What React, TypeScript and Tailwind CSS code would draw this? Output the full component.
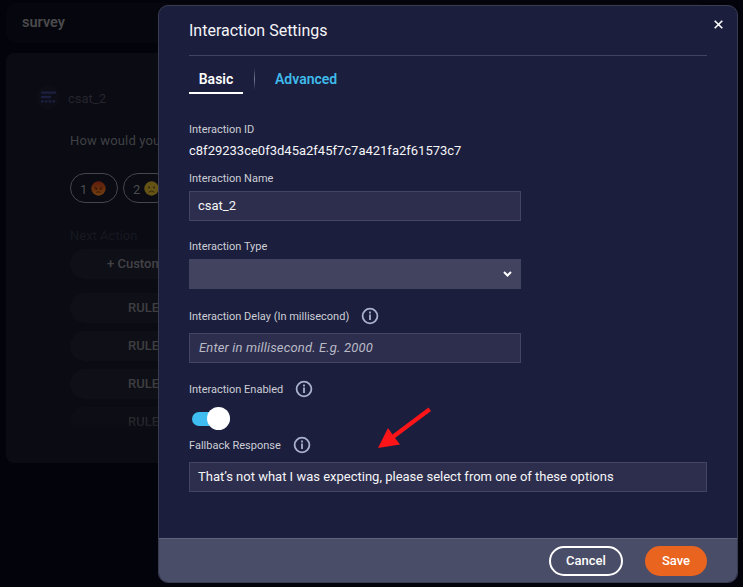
import React from "react";

function InfoIcon() {
  return (
    <svg className="h-[18px] w-[18px] shrink-0" viewBox="0 0 18 18" fill="none">
      <circle cx="9" cy="9" r="7.4" stroke="#a9b0d0" strokeWidth="1.8" />
      <path d="M9 7.6V13" stroke="#a9b0d0" strokeWidth="1.8" />
      <path d="M9 4.6V6.4" stroke="#a9b0d0" strokeWidth="1.8" />
    </svg>
  );
}

function Label({ text, width, info = false, className = "" }: { text: string; width: string; info?: boolean; className?: string }) {
  return (
    <div className={`flex h-4 items-center text-[11px] leading-4 text-[#cdced6] ${className}`}>
      <span className={`whitespace-nowrap pt-[2px] ${width}`}>{text}</span>
      {info && <InfoIcon />}
    </div>
  );
}

function Field({ children, className = "" }: { children: React.ReactNode; className?: string }) {
  return (
    <div className={`flex h-[30px] items-center border border-[#444562] bg-[#2d2e4d] pl-2 text-[13px] whitespace-nowrap ${className}`}>
      {children}
    </div>
  );
}

function Angry() {
  return (
    <svg className="h-[15px] w-[15px]" viewBox="0 0 15 15" fill="none">
      <defs>
        <linearGradient id="angry" x1="0" y1="0" x2="0" y2="1">
          <stop stopColor="#5f1c0c" />
          <stop offset="1" stopColor="#71400f" />
        </linearGradient>
      </defs>
      <circle cx="7.5" cy="7.5" r="7.2" fill="url(#angry)" />
      <path d="M3.4 6.2L6.4 7.6M11.6 6.2L8.6 7.6M5.4 11.4Q7.5 10.2 9.6 11.4" stroke="#2a0f08" strokeWidth="0.8" />
      <circle cx="5.1" cy="8.2" r="0.8" fill="#2a0f08" />
      <circle cx="9.9" cy="8.2" r="0.8" fill="#2a0f08" />
    </svg>
  );
}

function Frown() {
  return (
    <svg className="h-[15px] w-[15px]" viewBox="0 0 15 15" fill="none">
      <circle cx="7.5" cy="7.5" r="7.2" fill="#645315" />
      <ellipse cx="5" cy="6.4" rx="0.8" ry="1.1" fill="#2b220c" />
      <ellipse cx="10" cy="6.4" rx="0.8" ry="1.1" fill="#2b220c" />
      <path d="M4.6 11.2Q7.5 9 10.4 11.2" stroke="#2b220c" strokeWidth="0.8" />
    </svg>
  );
}

function Rule({ className = "" }: { className?: string }) {
  return (
    <div className={`h-[30px] w-[300px] rounded-full bg-[#0f1017] pl-[58px] text-[13px] leading-[29px] font-medium text-[#3e3e41] ${className}`}>
      RULE 1
    </div>
  );
}

function Backdrop() {
  return (
    <div className="flex h-full w-[700px] flex-col gap-[10px] overflow-hidden pt-[3px] pl-[6px]">
      <div className="h-10 shrink-0 rounded-l-[10px] bg-[#06070e] pl-4 text-[14.5px] leading-[39px] font-semibold text-[#4a4a4c]">survey</div>
      <div className="h-[410px] shrink-0 overflow-hidden rounded-l-[8px] bg-[#0a0b13] pt-8 pl-[30px]">
        <div className="flex h-6 items-center gap-2">
          <div className="flex h-6 w-6 items-center justify-center rounded-full bg-[#0d0d16]">
            <svg className="h-3 w-[15px]" viewBox="0 0 15 12" fill="none" stroke="#1c2040" strokeWidth="2.4">
              <path d="M0 1.6H15M0 6H10" />
              <path d="M0 10.4H14" strokeDasharray="2.6 1.2" />
            </svg>
          </div>
          <span className="pt-[3px] text-[13px] leading-5 text-[#25262d]">csat_2</span>
        </div>
        <div className="pt-[22px] pl-[34px]">
          <div className="h-5 whitespace-nowrap text-[13px] leading-5 tracking-[0.15px] text-[#404144]">How would you rate us?</div>
          <div className="mt-[22px] flex gap-[5px] text-[13px] text-[#4a4b4d]">
            <div className="flex h-[30px] w-12 shrink-0 items-center gap-[4px] rounded-full border border-[#46474a] pl-[9px]">
              <span className="pt-[3px]">1</span><Angry />
            </div>
            <div className="flex h-[30px] w-12 shrink-0 items-center gap-[4px] rounded-full border border-[#46474a] pl-[9px]">
              <span className="pt-[3px]">2</span><Frown />
            </div>
          </div>
          <div className="mt-[23px] h-5 text-[13px] leading-5 text-[#171921]">Next Action</div>
          <div className="mt-[3px] h-[30px] w-[300px] rounded-full bg-[#0f1017] pl-[37px] text-[13px] leading-[29px] font-medium text-[#434347]">+ Custom Rule</div>
          <Rule className="mt-[14px]" />
          <Rule className="mt-2" />
          <Rule className="mt-2" />
          <div className="mt-2 h-[26px] overflow-hidden mask-[linear-gradient(to_bottom,rgba(0,0,0,0.8),rgba(0,0,0,0.45)_70%,transparent)]"><Rule /></div>
        </div>
      </div>
    </div>
  );
}

export default function App() {
  return (
    <div className="relative h-[587px] w-[743px] overflow-hidden bg-[#02030b] font-[Roboto,sans-serif]">
      <Backdrop />
      <div className="absolute top-[5px] left-[158px] flex h-[578px] w-[580px] flex-col overflow-hidden rounded-[10px] border border-[#3a3c50] bg-[#1b1e3d]">
        <div className="flex-1 px-[30px]">
          <div className="flex h-[50px] items-center justify-between border-b border-[#414360]">
            <h1 className="text-[16px] text-[#f5f5f8]">Interaction Settings</h1>
            <svg className="mr-[-16px] mb-[13px] h-[9px] w-[9px]" viewBox="0 0 9 9" stroke="#fff" strokeWidth="1.6">
              <path d="M0.7 0.7L8.3 8.3M8.3 0.7L0.7 8.3" />
            </svg>
          </div>
          <div className="flex h-[38px] text-[14px] leading-[46px] font-semibold">
            <div className="h-[38px] w-[54px] border-b-2 border-white text-center text-white">Basic</div>
            <div className="mt-3 ml-[11px] h-[22px] w-px bg-linear-to-b from-transparent via-[#777991] to-transparent" />
            <div className="ml-5 text-[#3fbaea]">Advanced</div>
          </div>
          <Label className="mt-[27px]" text="Interaction ID" width="w-20" />
          <div className="mt-1 h-5 text-[13px] leading-5 text-[#f5f5f8]">c8f29233ce0f3d45a2f45f7c7a421fa2f61573c7</div>
          <Label className="mt-[9px]" text="Interaction Name" width="w-24" />
          <Field className="mt-[5px] w-[332px] text-[#f5f5f8]"><span>csat_2</span></Field>
          <Label className="mt-[17px]" text="Interaction Type" width="w-24" />
          <div className="mt-[5px] flex h-[30px] w-[332px] items-center justify-end bg-[#41435f] pr-[9px]">
            <svg className="h-2 w-[9px]" viewBox="0 0 9 8" fill="none" stroke="#fff" strokeWidth="2">
              <path d="M1 2L4.5 5.5L8 2" />
            </svg>
          </div>
          <Label className="mt-[19px]" text="Interaction Delay (In millisecond)" width="w-[172px]" info />
          <Field className="mt-[9px] w-[332px] text-[#b9bac6] italic"><span className="pl-px tracking-[0.16px]">Enter in millisecond. E.g. 2000</span></Field>
          <Label className="mt-[18px]" text="Interaction Enabled" width="w-[106px]" info />
          <div className="mt-[10px] flex h-[23px] items-center pl-[3px]">
            <div className="flex h-[14px] w-[38px] items-center justify-end rounded-full bg-[#3fbdf1]">
              <div className="h-[23px] w-[23px] shrink-0 rounded-full bg-white" />
            </div>
          </div>
          <Label className="mt-[7px]" text="Fallback Response" width="w-[104px]" info />
          <Field className="mt-[9px] text-[#f5f5f8]"><span>That’s not what I was expecting, please select from one of these options</span></Field>
        </div>
        <div className="flex h-[44px] shrink-0 items-center justify-end gap-[22px] border-t border-[#62647f] bg-[#4a4d67] pr-[30px] text-[13px] font-medium text-white">
          <button className="h-[30px] w-[74px] rounded-full border-2 border-white">Cancel</button>
          <button className="h-[30px] w-[62px] rounded-full bg-[#e9641f]">Save</button>
        </div>
      </div>
      <svg className="absolute top-[405px] left-[376px] h-[46px] w-[58px]" viewBox="376 405 58 46">
        <path d="M378 448L388 428L392.5 434.5L428.5 407.5L431 411L395 438L400 444.5Z" fill="#fb1518" />
      </svg>
    </div>
  );
}
